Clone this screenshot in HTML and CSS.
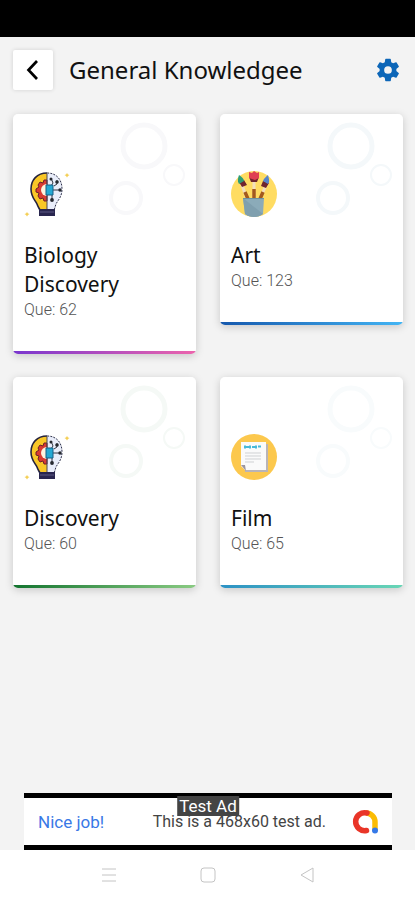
FILE: index.html
```html
<!DOCTYPE html>
<html lang="en">
<head>
<meta charset="utf-8">
<meta name="viewport" content="width=device-width, initial-scale=1">
<title>General Knowledgee</title>
<link rel="stylesheet" href="styles.css">
</head>
<body>
<svg class="defs" aria-hidden="true">
  <symbol id="rings" viewBox="0 0 80 98">
    <g fill="none" stroke="currentColor">
      <circle cx="37" cy="25" r="21" stroke-width="5"/>
      <circle cx="67" cy="54" r="10" stroke-width="2"/>
      <circle cx="19" cy="77" r="15" stroke-width="4"/>
    </g>
  </symbol>
  <symbol id="bulb" viewBox="0 0 46 46">
    <path d="M23 2C13 2 7 9 7 18c0 8 4 11 6 15 1 3 2 4 3 6h7z" fill="#f9c727"/>
    <path d="M23 2c10 0 15 7 15 16 0 8-4 11-6 15-1 3-1 4-2 6h-7z" fill="#e9edfa"/>
    <path d="M23 2C13 2 7 9 7 18c0 8 4 11 6 15 1 3 2 4 3 6" fill="none" stroke="#25233d" stroke-width="1.6"/>
    <path d="M23 2c10 0 15 7 15 16 0 8-4 11-6 15-1 3-1 4-2 6" fill="none" stroke="#30334d" stroke-width="1" stroke-dasharray="2 1.2"/>
    <path d="M23 9h-3l-1 3-3-1-2 3 1 2-3 2v3l3 1-1 3 2 3 3-1 1 3h3z" fill="#d83a32" stroke="#6e1f2b"/>
    <path d="M23 13a6 6 0 0 0 0 12z" fill="#fff3df"/>
    <path d="M23 3v35" stroke="#4a4650" stroke-width="1"/>
    <path d="M29 19h8M27 15l2-3-2-5M30 15l3-2V9M28 23v6" fill="none" stroke="#343744" stroke-width="1"/>
    <path d="M22 14h7v10h-7z" fill="#25a8d3" stroke="#155f86"/>
    <g fill="#25282f"><circle cx="27" cy="8" r="1.5"/><circle cx="33" cy="11" r="1.8"/><circle cx="36" cy="19" r="1.7"/><circle cx="28" cy="29" r="1.9"/></g>
    <path d="M15 38h16v7H15z" fill="#29264f"/>
    <path d="M16 41h14" stroke="#5c5984"/>
    <path d="M43 2l1 1.500 1.500.5-1.500 1-1 1.500-1-1.500-1.500-1 1.500-.5zM3 41l1 1.500 1.500.5-1.500 1L3 45.500 2 44 .5 43l1.500-.5z" fill="#f4cf55"/>
  </symbol>
</svg>
<div class="screen">
  <div class="status"></div>
  <header class="topbar">
    <button class="back" type="button" aria-label="Back">
      <svg width="40" height="40" viewBox="0 0 40 40"><path d="M24 11l-8.500 9 8.500 9" fill="none" stroke="#000" stroke-width="2.700"/></svg>
    </button>
    <h1>General Knowledgee</h1>
    <button class="settings" type="button" aria-label="Settings">
      <svg width="28" height="28" viewBox="0 0 24 24"><path fill="#0c66b8" fill-rule="evenodd" d="M19.140 12.940c.04-.3.060-.61.060-.94s-.02-.64-.07-.94l2.030-1.580a.49.49 0 0 0 .12-.61l-1.920-3.320a.49.49 0 0 0-.59-.22l-2.390.96a7 7 0 0 0-1.620-.94l-.36-2.540a.48.48 0 0 0-.48-.41h-3.840a.47.47 0 0 0-.47.41l-.36 2.540c-.59.24-1.130.57-1.620.94l-2.390-.96a.48.48 0 0 0-.59.22L2.740 8.870a.47.47 0 0 0 .12.610l2.030 1.580c-.05.3-.09.630-.09.940s.02.640.07.940l-2.030 1.580a.49.49 0 0 0-.12.610l1.920 3.320c.12.220.370.290.590.220l2.390-.96c.5.380 1.030.7 1.620.94l.36 2.540c.05.240.240.410.480.410h3.840c.24 0 .44-.17.470-.41l.36-2.540a7 7 0 0 0 1.620-.94l2.390.96c.22.080.470 0 .59-.22l1.920-3.320a.47.47 0 0 0-.12-.61zM12 15.300A3.300 3.300 0 1 1 12 8.700a3.300 3.300 0 0 1 0 6.600z"/></svg>
    </button>
  </header>
  <main class="grid">
    <a class="card purple" href="#biology">
      <svg class="rings" aria-hidden="true"><use href="#rings"/></svg>
      <svg class="icon" aria-hidden="true"><use href="#bulb"/></svg>
      <h2>Biology Discovery</h2>
      <p>Que: 62</p>
    </a>
    <a class="card blue" href="#art">
      <svg class="rings" aria-hidden="true"><use href="#rings"/></svg>
      <svg class="icon" viewBox="0 0 46 46" aria-hidden="true">
        <circle cx="23" cy="23" r="23" fill="#ffdc62"/>
        <path d="M11 14l5 14M23 9v18M35 14l-6 14" stroke="#f3dfbd" stroke-width="3"/>
        <path d="M14 21l3 7M23 18v9M32 21l-3 7" stroke="#a3591d" stroke-width="3.500"/>
        <path d="M8 11l5-2 3 5-5 2zM18 6h10l-2 5h-6zM32 10l6 2-3 5-5-2z" fill="#6f252e"/>
        <path d="M8 4c3 2 5 4 5 6l-5 3C6 10 7 7 8 4z" fill="#2d9d75"/>
        <path d="M18 1l3 1 2-2 3 2 2-1v6l-4 2-6-2z" fill="#df4053"/>
        <path d="M37 4c1 4 2 7 0 9l-5-3c1-3 3-4 5-6z" fill="#5684ca"/>
        <path d="M12 27h21l-1 16c-5 4-13 4-18 0z" fill="#8babb9"/>
        <path d="M12 27l20 16c-5 4-13 4-18 0z" fill="#7f9fae"/>
        <path d="M12 27h21v1H12z" fill="#6d929f"/>
      </svg>
      <h2>Art</h2>
      <p>Que: 123</p>
    </a>
    <a class="card green" href="#discovery">
      <svg class="rings" aria-hidden="true"><use href="#rings"/></svg>
      <svg class="icon" aria-hidden="true"><use href="#bulb"/></svg>
      <h2>Discovery</h2>
      <p>Que: 60</p>
    </a>
    <a class="card teal" href="#film">
      <svg class="rings" aria-hidden="true"><use href="#rings"/></svg>
      <svg class="icon" viewBox="0 0 46 46" aria-hidden="true">
        <circle cx="23" cy="23" r="23" fill="#fcc84d"/>
        <path d="M13 10h24v28H14z" fill="#b9b4b7"/>
        <path d="M10 8h25v28H14l-4-4z" fill="#fafafa"/>
        <path d="M10 31h4l1 6z" fill="#9c96a0"/>
        <path d="M13 11.500h2v3h-2zM15 12h3v2h-3zM18 11.500h2v3h-2zM21 12h3v2h-3zM24 11.500h2v3h-2zM27 11.500h3v2h-3z" fill="#49b9d8"/>
        <path d="M14 19h16M14 22h16M14 25h16M14 28h9" stroke="#cfd1d3"/>
      </svg>
      <h2>Film</h2>
      <p>Que: 65</p>
    </a>
  </main>
  <aside class="ad">
    <span class="label">Test Ad</span>
    <strong>Nice job!</strong>
    <span class="copy">This is a 468x60 test ad.</span>
    <svg width="24" height="24" viewBox="0 0 24 24" aria-hidden="true">
      <path d="M12 3a9 9 0 0 1 9 9v8" fill="none" stroke="#fbbc04" stroke-width="5.500"/>
      <path d="M13 3A9 9 0 1 0 12.500 20.500" fill="none" stroke="#e93528" stroke-width="5.500" stroke-linecap="round"/>
      <circle cx="21" cy="20.500" r="3" fill="#3579e8"/>
    </svg>
  </aside>
  <nav class="system">
    <button type="button" aria-label="Recent apps"><svg width="16" height="16" viewBox="0 0 16 16"><path d="M1 2h14M1 8h14M1 14h14"/></svg></button>
    <button type="button" aria-label="Home"><svg width="16" height="16" viewBox="0 0 16 16"><rect x="1" y="1" width="14" height="14" rx="3"/></svg></button>
    <button type="button" aria-label="Go back"><svg width="16" height="16" viewBox="0 0 16 16"><path d="M14 1v14L2 8z" stroke-linejoin="round"/></svg></button>
  </nav>
</div>
</body>
</html>
```
FILE: styles.css
```css
* { box-sizing: border-box; }
body { margin: 0; background: #f3f3f3; color: #111; font-family: "Noto Sans", sans-serif; }
h1, h2, p { margin: 0; font-weight: 400; }
button { border: 0; padding: 0; background: none; }
svg { display: block; overflow: visible; }
.defs { position: absolute; width: 0; height: 0; }
.screen { min-height: 100vh; display: flex; flex-direction: column; }
.status { height: 37px; background: #000; }
.topbar { display: flex; align-items: center; padding: 13px 13px 24px 13px; }
.back { background: #fff; border-radius: 2px; box-shadow: 0 0 4px rgba(0, 0, 0, .14); }
h1 { flex: 1; margin-left: 16px; font-size: 24px; line-height: 40px; }
.grid { display: grid; grid-template-columns: 1fr 1fr; gap: 23px 24px; align-items: start; padding: 0 12px 0 13px; }
.card { position: relative; display: block; padding: 57px 11px 33px; overflow: hidden; border-radius: 5px; color: inherit; text-decoration: none; background: linear-gradient(#fff, #fff) top / 100% calc(100% - 3px) no-repeat, linear-gradient(90deg, var(--from), var(--to)); box-shadow: 0 2px 8px rgba(0, 0, 0, .18); }
.rings { position: absolute; top: 7px; right: 9px; width: 80px; height: 98px; color: var(--ring); }
.icon { width: 46px; height: 46px; margin-bottom: 24px; }
h2 { font-size: 21px; line-height: 29px; }
.card p { color: #555; font: 300 16px/22px Roboto, sans-serif; }
.purple { --from: #7936ce; --to: #ec65ad; --ring: #f8f8fa; }
.blue { --from: #1558ad; --to: #43b5f4; --ring: #f4f8fa; }
.green { --from: #13742f; --to: #8acb83; --ring: #f5f9f6; }
.teal { --from: #2c91c5; --to: #69d6b5; --ring: #f8fbfc; }
.ad { position: relative; display: flex; align-items: center; height: 57px; margin: auto 23px 0 24px; padding: 0 14px; border-top: 5px solid #000; border-bottom: 5px solid #000; background: #fff; font: 16px/20px Roboto, sans-serif; }
.ad strong { flex: 1; color: #3978e6; font-size: 17px; font-weight: 400; }
.copy { margin-right: 28px; color: #444; }
.label { position: absolute; top: -2px; left: 50%; transform: translateX(-50%); padding: 0 2px; background: #444; color: #fff; font-size: 17px; }
.system { display: flex; justify-content: center; gap: 83px; padding: 17px 0; background: #fff; }
.system svg { fill: none; stroke: #c4c4c4; stroke-width: 1; }
```
